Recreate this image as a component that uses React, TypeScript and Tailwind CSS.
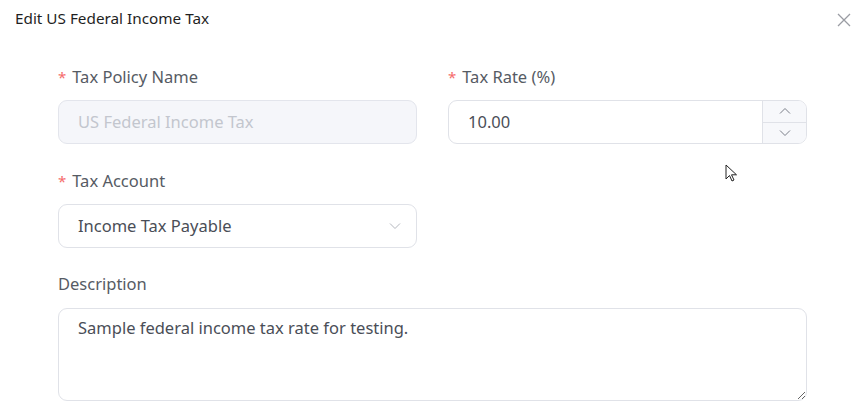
import React from 'react';

const font = { fontFamily: '"Noto Sans", Lato, sans-serif' };

const Label = ({ text, required }: { text: string; required?: boolean }) => (
  <div className="flex items-center h-6 text-[16.5px] text-[#565b64]">
    {required && <span className="text-[#f56c6c] mr-[6px] text-[15px]">*</span>}
    {text}
  </div>
);

const ChevronUp = () => (
  <svg width="12" height="8" viewBox="0 0 12 8" fill="none" stroke="#7a7f88" strokeWidth="1">
    <path d="M1 6.5 L6 1.5 L11 6.5" />
  </svg>
);

const ChevronDown = ({ color = '#7a7f88', w = 12 }: { color?: string; w?: number }) => (
  <svg width={w} height="8" viewBox="0 0 12 8" fill="none" stroke={color} strokeWidth="1">
    <path d="M1 1.5 L6 6.5 L11 1.5" />
  </svg>
);

const App = () => {
  return (
    <div className="relative w-[867px] h-[415px] bg-white overflow-hidden" style={font}>
      <div className="flex items-center justify-between pl-[15px] pr-[16px] pt-[6px] h-[30px]">
        <span className="text-[15.3px] text-[#1f1f1f] leading-6">Edit US Federal Income Tax</span>
        <svg width="14" height="14" viewBox="0 0 14 14" stroke="#9a9ca3" strokeWidth="1.3" className="mt-[3px]">
          <path d="M1 1 L13 13 M13 1 L1 13" />
        </svg>
      </div>

      <div className="pl-[58px] pr-[60px] pt-[35px]">
        <div className="grid grid-cols-2 gap-x-[31px]">
          <div>
            <Label text="Tax Policy Name" required />
            <div className="mt-[11px] h-[44px] rounded-[9px] border border-[#e3e5ec] bg-[#f5f6fa] flex items-center px-[19px] text-[16.5px] text-[#c3c6ce]">
              US Federal Income Tax
            </div>
          </div>
          <div>
            <Label text="Tax Rate (%)" required />
            <div className="mt-[11px] h-[44px] rounded-[9px] border border-[#e0e2e8] flex overflow-hidden">
              <div className="flex-1 flex items-center px-[19px] text-[16.5px] text-[#4a4e57]">10.00</div>
              <div className="w-[44px] border-l border-[#e0e2e8] bg-[#f7f8fb] flex flex-col">
                <div className="flex-1 flex items-center justify-center border-b border-[#e0e2e8]">
                  <ChevronUp />
                </div>
                <div className="flex-1 flex items-center justify-center">
                  <ChevronDown />
                </div>
              </div>
            </div>
          </div>
          <div className="mt-[25px]">
            <Label text="Tax Account" required />
            <div className="mt-[11px] h-[44px] rounded-[9px] border border-[#e0e2e8] flex items-center justify-between pl-[19px] pr-[14px] text-[16.5px] text-[#4a4e57]">
              <span>Income Tax Payable</span>
              <ChevronDown color="#b4b7be" w={14} />
            </div>
          </div>
        </div>

        <div className="mt-[24px]">
          <Label text="Description" />
          <textarea
            readOnly
            defaultValue="Sample federal income tax rate for testing."
            className="mt-[12px] block w-full h-[93px] rounded-[9px] border border-[#e0e2e8] px-[19px] py-[7px] text-[16.5px] text-[#4a4e57] outline-none resize-y"
            style={font}
          />
        </div>
      </div>

      {/* mouse pointer */}
      <svg className="absolute left-[725px] top-[164px]" width="14" height="20" viewBox="0 0 14 20">
        <path
          d="M1 1 L1 15 L4.5 11.5 L7 17 L9 16 L6.5 10.8 L11.5 10.8 Z"
          fill="#fff"
          stroke="#222"
          strokeWidth="1"
          strokeLinejoin="round"
        />
      </svg>
    </div>
  );
};

export default App;
